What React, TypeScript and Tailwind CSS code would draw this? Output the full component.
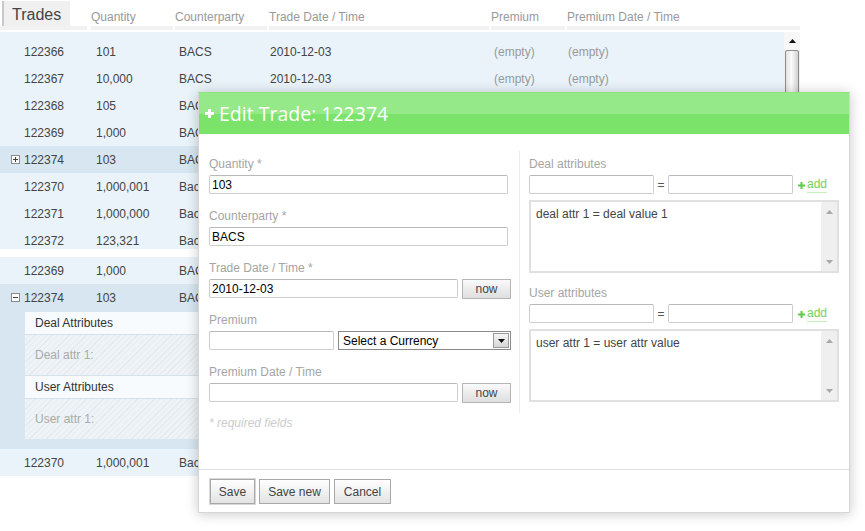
import React from "react";

type RowData = {
  id: string;
  q: string;
  c: string;
  d: string;
  p: string;
  pd: string;
  icon?: "plus" | "minus";
  dark?: boolean;
};

const rows1: RowData[] = [
  { id: "122366", q: "101", c: "BACS", d: "2010-12-03", p: "(empty)", pd: "(empty)" },
  { id: "122367", q: "10,000", c: "BACS", d: "2010-12-03", p: "(empty)", pd: "(empty)" },
  { id: "122368", q: "105", c: "BACS", d: "2010-12-03", p: "(empty)", pd: "(empty)" },
  { id: "122369", q: "1,000", c: "BACS", d: "2010-12-03", p: "(empty)", pd: "(empty)" },
  { id: "122374", q: "103", c: "BACS", d: "2010-12-03", p: "(empty)", pd: "(empty)", icon: "plus", dark: true },
  { id: "122370", q: "1,000,001", c: "Bacs", d: "2010-12-03", p: "(empty)", pd: "(empty)" },
  { id: "122371", q: "1,000,000", c: "Bacs", d: "2010-12-03", p: "(empty)", pd: "(empty)" },
  { id: "122372", q: "123,321", c: "Bacs", d: "2010-12-03", p: "(empty)", pd: "(empty)" },
];

function ExpandBox({ sign }: { sign: "plus" | "minus" }) {
  return (
    <svg width="9" height="9" viewBox="0 0 9 9" className="mr-[4px] shrink-0">
      <rect x="0.5" y="0.5" width="8" height="8" fill="#ffffff" stroke="#8a8a8a" />
      <line x1="2" y1="4.5" x2="7" y2="4.5" stroke="#444" strokeWidth="1" />
      {sign === "plus" && <line x1="4.5" y1="2" x2="4.5" y2="7" stroke="#444" strokeWidth="1" />}
    </svg>
  );
}

function Row({ r }: { r: RowData }) {
  return (
    <div
      className={`flex h-[27px] items-center text-[12px] leading-[16px] text-[#444] ${
        r.dark ? "bg-[#d7e6f0]" : ""
      }`}
    >
      <div className="w-[91px] shrink-0 flex items-center pl-[11px]">
        {r.icon ? <ExpandBox sign={r.icon} /> : <span className="w-[13px] shrink-0" />}
        <span>{r.id}</span>
      </div>
      <div className="w-[84px] shrink-0 pl-[5px]">{r.q}</div>
      <div className="w-[94px] shrink-0 pl-[4px]">{r.c}</div>
      <div className="w-[222px] shrink-0 pl-[1px]">{r.d}</div>
      <div className="w-[76px] shrink-0 pl-[3px] text-[#999]">{r.p}</div>
      <div className="flex-1 pl-[1px] text-[#999]">{r.pd}</div>
    </div>
  );
}

function HeadCell({ w, ml, label }: { w: string; ml: string; label: string }) {
  return (
    <div className={`${w} ${ml} h-[30px] border-b-4 border-[#f2f2f2] pt-[9px] leading-[16px] text-[12px] text-[#999] shrink-0`}>
      {label}
    </div>
  );
}

function Grid() {
  return (
    <div className="w-[800px]">
      {/* header */}
      <div className="flex h-[30px] mb-[2px]">
        <div className="w-[87px] h-[30px] border-b-4 border-[#f2f2f2] shrink-0">
          <div className="mt-[1px] ml-[2px] w-[68px] h-[25px] bg-[#f0f0f0] border-l-2 border-[#c8c8c8] pl-[8px] flex items-center pt-[3px] text-[16px] text-[#444]">
            Trades
          </div>
        </div>
        <HeadCell w="w-[82px]" ml="ml-[4px]" label="Quantity" />
        <HeadCell w="w-[92px]" ml="ml-[2px]" label="Counterparty" />
        <HeadCell w="w-[220px]" ml="ml-[2px]" label="Trade Date / Time" />
        <HeadCell w="w-[74px]" ml="ml-[2px]" label="Premium" />
        <HeadCell w="w-[233px]" ml="ml-[2px]" label="Premium Date / Time" />
      </div>

      {/* section 1 */}
      <div className="flex">
        <div className="w-[784px] h-[217px] overflow-hidden bg-[#eaf3fa] pt-[6px]">
          {rows1.map((r) => (
            <Row key={r.id + r.q} r={r} />
          ))}
        </div>
        <div className="w-[16px] h-[217px] bg-[#efefef] flex flex-col items-center">
          <div className="w-[16px] h-[18px] bg-[#f7f7f7] flex items-center justify-center">
            <svg width="7" height="4" viewBox="0 0 7 4">
              <polygon points="0,4 7,4 3.5,0" fill="#111" />
            </svg>
          </div>
          <div className="w-[14px] h-[150px] rounded-[2px] border border-[#8d8d8d] bg-[linear-gradient(to_right,#e2e2e2,#fbfbfb_45%,#d2d2d2)]" />
        </div>
      </div>

      <div className="h-[8px]" />

      {/* section 2 */}
      <div className="w-[784px] bg-[#eaf3fa]">
        <Row r={{ id: "122369", q: "1,000", c: "BACS", d: "2010-12-03", p: "(empty)", pd: "(empty)" }} />
        <div className="bg-[#d7e6f0]">
          <Row r={{ id: "122374", q: "103", c: "BACS", d: "2010-12-03", p: "(empty)", pd: "(empty)", icon: "minus", dark: true }} />
          <div className="pt-[1px] pb-[10px] pl-[25px]">
            <div className="w-[740px] text-[12px] leading-[16px]">
              <div className="h-[23px] bg-[#f8fbfd] border-b border-[#d6e1ea] pl-[10px] flex items-center text-[#333]">
                Deal Attributes
              </div>
              <div className="h-[40px] pl-[10px] flex items-center text-[#aaa] bg-[repeating-linear-gradient(135deg,#eef3f7_0px,#eef3f7_3px,#e4eaef_3px,#e4eaef_4px)]">
                Deal attr 1:
              </div>
              <div className="h-[24px] bg-[#f8fbfd] border-y border-[#d6e1ea] pl-[10px] flex items-center text-[#333]">
                User Attributes
              </div>
              <div className="h-[40px] pl-[10px] flex items-center text-[#aaa] bg-[repeating-linear-gradient(135deg,#eef3f7_0px,#eef3f7_3px,#e4eaef_3px,#e4eaef_4px)]">
                User attr 1:
              </div>
            </div>
          </div>
        </div>
        <Row r={{ id: "122370", q: "1,000,001", c: "Bacs", d: "2010-12-03", p: "(empty)", pd: "(empty)" }} />
      </div>
    </div>
  );
}

function TextInput({ w, value }: { w: string; value?: string }) {
  return (
    <div
      className={`${w} h-[19px] shrink-0 border border-[#cdcdcd] border-t-[#b9b9b9] rounded-[2px] bg-white pl-[2px] flex items-center text-[12px] text-black leading-[16px]`}
    >
      {value}
    </div>
  );
}

function NowButton() {
  return (
    <div className="ml-[4px] w-[49px] h-[20px] shrink-0 border border-[#b5b5b5] bg-[linear-gradient(to_bottom,#fafafa,#dedede)] flex items-center justify-center text-[12px] text-[#444]">
      now
    </div>
  );
}

function Label({ children }: { children: React.ReactNode }) {
  return <div className="h-[17px] pt-[1px] leading-[16px] mb-[3px] text-[12px] text-[#a5a5a5]">{children}</div>;
}

function AttrTextarea({ text }: { text: string }) {
  return (
    <div className="w-[310px] h-[73px] border-2 border-[#e0e0e0] bg-white flex">
      <div className="flex-1 pl-[5px] pt-[4px] leading-[16px] text-[12px] text-[#444]">{text}</div>
      <div className="w-[16px] h-full bg-[#efefef] flex flex-col items-center justify-between pt-[8px] pb-[7px]">
        <svg width="7" height="4" viewBox="0 0 7 4">
          <polygon points="0,4 7,4 3.5,0" fill="#a8a8a8" />
        </svg>
        <svg width="7" height="4" viewBox="0 0 7 4">
          <polygon points="0,0 7,0 3.5,4" fill="#a8a8a8" />
        </svg>
      </div>
    </div>
  );
}

function AttrInputs() {
  return (
    <div className="flex items-center h-[19px] mb-[6px]">
      <TextInput w="w-[125px]" />
      <div className="w-[14px] text-center text-[12px] text-[#555]">=</div>
      <TextInput w="w-[125px]" />
      <div className="ml-[5px] flex items-center text-[12px] leading-[16px]">
        <svg width="7" height="7" viewBox="0 0 7 7" className="mr-[2px] mt-[1px]">
          <rect x="0" y="2.5" width="7" height="2" fill="#5dcc4a" />
          <rect x="2.5" y="0" width="2" height="7" fill="#5dcc4a" />
        </svg>
        <span className="text-[#6ed35a] border-b border-[#c4efbb] leading-[15px]">add</span>
      </div>
    </div>
  );
}

function FooterButton({ w, children, focus }: { w: string; children: React.ReactNode; focus?: boolean }) {
  return (
    <div
      className={`${w} h-[25px] border border-[#a8a8a8] bg-[linear-gradient(to_bottom,#ffffff,#e3e3e3)] flex items-center justify-center text-[12px] text-[#444] ${
        focus ? "shadow-[0_0_0_1px_#d8d8d8]" : ""
      }`}
    >
      {children}
    </div>
  );
}

function Dialog() {
  return (
    <div className="absolute left-[198px] top-[92px] w-[652px] h-[421px] bg-white border border-[#d6d6d6] border-t-[#8fe47e] shadow-[0_1px_12px_rgba(0,0,0,0.22)] flex flex-col">
      {/* header */}
      <div className="h-[41px] shrink-0 bg-[linear-gradient(to_bottom,#95e988_21px,#7ce36a_21px)] flex items-center pl-[6px] font-['Open_Sans',sans-serif] text-white text-[19.5px]">
        <svg width="9" height="9" viewBox="0 0 9 9" className="shrink-0">
          <rect x="0" y="3" width="9" height="3" fill="#ffffff" />
          <rect x="3" y="0" width="3" height="9" fill="#ffffff" />
        </svg>
        <span className="ml-[5px] leading-[26px]">Edit Trade: 122374</span>
      </div>

      {/* body */}
      <div className="h-[335px] shrink-0 flex pt-[21px] pl-[10px]">
        <div className="w-[302px] shrink-0">
          <div className="mb-[13px]">
            <Label>Quantity *</Label>
            <TextInput w="w-[299px]" value="103" />
          </div>
          <div className="mb-[13px]">
            <Label>Counterparty *</Label>
            <TextInput w="w-[299px]" value="BACS" />
          </div>
          <div className="mb-[13px]">
            <Label>Trade Date / Time *</Label>
            <div className="flex items-center h-[19px]">
              <TextInput w="w-[249px]" value="2010-12-03" />
              <NowButton />
            </div>
          </div>
          <div className="mb-[13px]">
            <Label>Premium</Label>
            <div className="flex items-center h-[19px]">
              <TextInput w="w-[125px]" />
              <div className="ml-[4px] w-[173px] h-[19px] shrink-0 border border-[#8a8a8a] bg-white flex items-center pl-[4px] text-[12px] text-black relative">
                Select a Currency
                <div className="absolute right-[1px] top-[1px] w-[16px] h-[15px] border border-[#9a9a9a] bg-[linear-gradient(to_bottom,#f6f6f6,#d6d6d6)] flex items-center justify-center">
                  <svg width="7" height="4" viewBox="0 0 7 4">
                    <polygon points="0,0 7,0 3.5,4" fill="#111" />
                  </svg>
                </div>
              </div>
            </div>
          </div>
          <div className="mb-[13px]">
            <Label>Premium Date / Time</Label>
            <div className="flex items-center h-[19px]">
              <TextInput w="w-[249px]" />
              <NowButton />
            </div>
          </div>
          <div className="mt-[3px] leading-[16px] text-[12px] italic text-[#cccccc]">* required fields</div>
        </div>

        <div className="ml-[8px] w-[1px] h-[262px] mt-[-4px] bg-[#ececec] shrink-0" />

        <div className="ml-[9px] w-[310px] shrink-0">
          <Label>Deal attributes</Label>
          <AttrInputs />
          <AttrTextarea text="deal attr 1 = deal value 1" />
          <div className="mt-[11px]">
            <Label>User attributes</Label>
            <AttrInputs />
            <AttrTextarea text="user attr 1 = user attr value" />
          </div>
        </div>
      </div>

      {/* footer */}
      <div className="flex-1 border-t border-[#e3e3e3] pt-[9px] pl-[11px] flex gap-[4px] items-start">
        <FooterButton w="w-[45px]" focus>
          Save
        </FooterButton>
        <FooterButton w="w-[71px]">Save new</FooterButton>
        <FooterButton w="w-[57px]">Cancel</FooterButton>
      </div>
    </div>
  );
}

export default function App() {
  return (
    <div className="relative w-[865px] h-[531px] bg-white overflow-hidden font-['Liberation_Sans',Arial,sans-serif] text-[12px]">
      <Grid />
      <Dialog />
    </div>
  );
}
